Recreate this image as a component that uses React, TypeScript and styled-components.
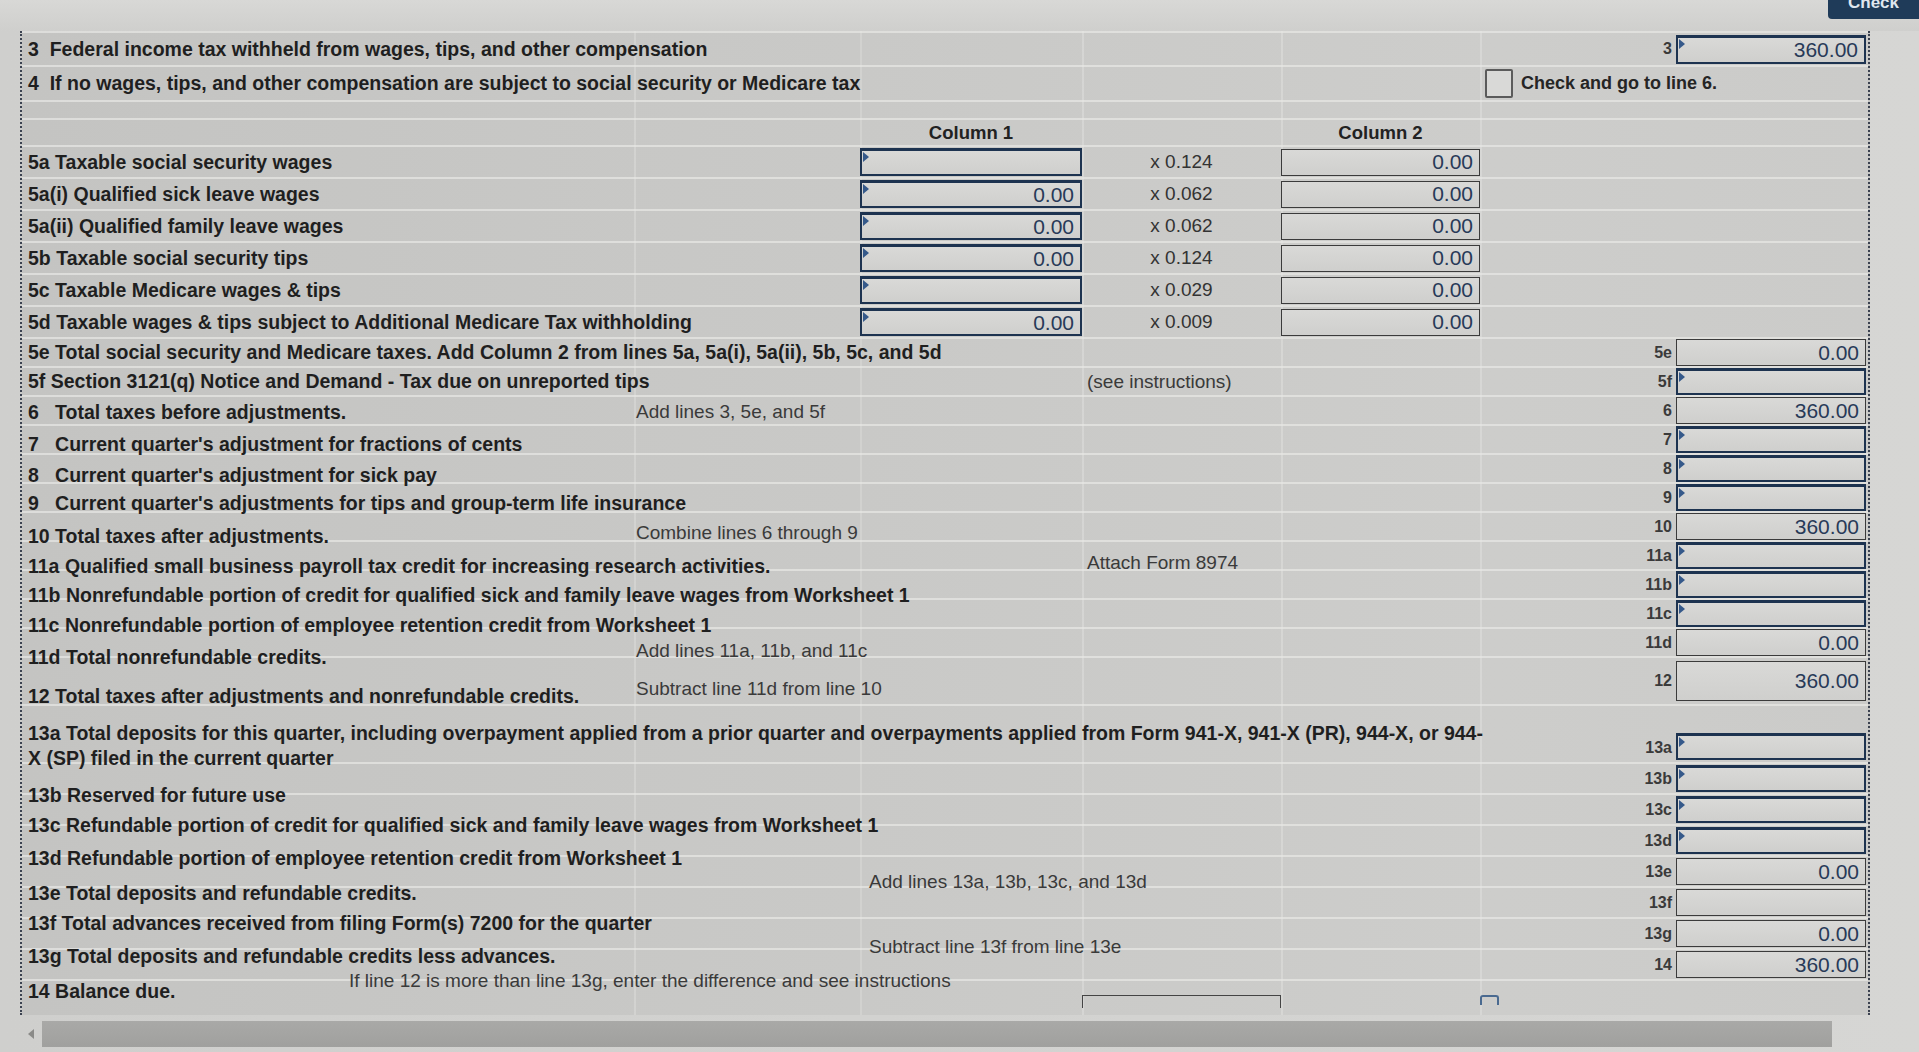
import React from "react";
import styled, { createGlobalStyle, css } from "styled-components";

const GlobalStyle = createGlobalStyle`
  html, body {
    margin: 0;
    padding: 0;
    background: #d2d2d0;
    font-family: "Liberation Sans", Arial, sans-serif;
    color: #1e1e1e;
    overflow: hidden;
  }
`;

const Page = styled.div`
  width: 1919px;
  height: 1052px;
  display: flex;
  flex-direction: column;
  background: linear-gradient(to right, #cfcfcd 0%, #d3d3d1 60%, #d6d6d4 100%);
`;

const TopStrip = styled.div`
  height: 31px;
  display: flex;
  justify-content: flex-end;
  align-items: flex-start;
  background: linear-gradient(to bottom, #d8d8d6, #cfcfcd);
`;

const CheckButton = styled.div`
  width: 91px;
  height: 19px;
  overflow: hidden;
  background: #1f3b59;
  border-bottom-left-radius: 4px;
  color: #dfe6ee;
  font-size: 17px;
  font-weight: bold;
  text-align: center;

  span {
    display: block;
    margin-top: -8px;
    line-height: 22px;
  }
`;

const FormArea = styled.div`
  margin-left: 20px;
  width: 1850px;
  height: 984px;
  overflow: hidden;
  border-left: 2px dotted #3b4250;
  border-right: 2px dotted #3b4250;
  box-sizing: border-box;
  background-color: #c7c7c5;
  background-image:
    linear-gradient(to right, transparent 612px, rgba(235,235,233,0.3) 612px, rgba(235,235,233,0.3) 614px, transparent 614px),
    linear-gradient(to right, transparent 838px, rgba(235,235,233,0.25) 838px, rgba(235,235,233,0.25) 840px, transparent 840px),
    linear-gradient(to right, transparent 1060px, rgba(235,235,233,0.35) 1060px, rgba(235,235,233,0.35) 1062px, transparent 1062px),
    linear-gradient(to right, transparent 1259px, rgba(235,235,233,0.35) 1259px, rgba(235,235,233,0.35) 1261px, transparent 1261px),
    linear-gradient(to right, transparent 1458px, rgba(235,235,233,0.35) 1458px, rgba(235,235,233,0.35) 1460px, transparent 1460px),
    linear-gradient(to right, #c4c4c2 0%, #c9c9c7 45%, #cdcdcb 80%, #cbcbc9 100%);
`;

const Row = styled.div<{ $h: number }>`
  display: grid;
  grid-template-columns: 612px 226px 222px 199px 199px 160px 36px 190px;
  grid-template-rows: 100%;
  height: ${(p) => p.$h}px;
  align-items: center;
  border-top: 2px solid rgba(232, 232, 230, 0.7);
  box-sizing: border-box;
`;

/* the photo sags toward the bottom left, so text on the left sits a bit lower */
const Label = styled.div<{ $drop?: number }>`
  grid-row: 1;
  grid-column: 1 / 7;
  padding-left: 6px;
  padding-top: ${(p) => (p.$drop ?? 0) * 2}px;
  font-size: 19.5px;
  font-weight: bold;
  color: #1f1f1f;
  white-space: nowrap;
  line-height: 25px;
`;

const Hint = styled.div<{ $col: number; $offset?: number; $drop?: number }>`
  grid-row: 1;
  grid-column: ${(p) => p.$col};
  padding-left: ${(p) => p.$offset ?? 2}px;
  padding-top: ${(p) => (p.$drop ?? 0) * 2}px;
  font-size: 19px;
  color: #3a3a3a;
  white-space: nowrap;
`;

const Rate = styled.div`
  grid-row: 1;
  grid-column: 4;
  text-align: center;
  font-size: 19px;
  color: #333;
`;

const ColumnHead = styled.div<{ $col: number }>`
  grid-row: 1;
  grid-column: ${(p) => p.$col};
  text-align: center;
  font-size: 18.5px;
  font-weight: bold;
  color: #222;
`;

const LineNo = styled.div<{ $end?: boolean }>`
  grid-row: 1;
  grid-column: 7;
  align-self: ${(p) => (p.$end ? "end" : "center")};
  padding-bottom: ${(p) => (p.$end ? 5 : 0)}px;
  text-align: right;
  padding-right: 4px;
  font-size: 16px;
  font-weight: bold;
  color: #3a3a3a;
`;

const Box = styled.div<{ $col: number; $edit?: boolean; $h?: number; $end?: boolean }>`
  grid-row: 1;
  grid-column: ${(p) => p.$col};
  align-self: ${(p) => (p.$end ? "end" : "center")};
  margin-bottom: ${(p) => (p.$end ? 2 : 0)}px;
  position: relative;
  height: ${(p) => p.$h ?? 27}px;
  box-sizing: border-box;
  display: flex;
  align-items: center;
  justify-content: flex-end;
  padding-right: 6px;
  font-size: 21px;
  color: #283a58;
  background: linear-gradient(to bottom, #d9d9d7, #cfcfcd);
  ${(p) =>
    p.$edit
      ? css`
          border: 2px solid #1d3350;
          border-top-width: 3px;
          &::before {
            content: "";
            position: absolute;
            left: 1px;
            top: 1px;
            border-top: 5px solid transparent;
            border-bottom: 5px solid transparent;
            border-left: 6px solid #35598a;
          }
        `
      : css`
          border: 1px solid #3b3b3b;
        `}
`;

const CheckWrap = styled.label`
  grid-row: 1;
  grid-column: 6 / 9;
  display: flex;
  align-items: center;
  gap: 8px;
  padding-left: 5px;
  font-size: 18px;
  font-weight: bold;
  color: #252525;
  white-space: nowrap;
`;

const CheckBox = styled.span`
  width: 24px;
  height: 25px;
  border: 2px solid #5b5b5b;
  border-radius: 2px;
  background: #d9d9d7;
`;

const Stub = styled.div<{ $col: number }>`
  grid-row: 1;
  grid-column: ${(p) => p.$col};
  align-self: start;
  height: 12px;
  border: 1px solid #444;
  border-bottom: none;
  margin-top: 14px;
`;

const Tab = styled.div`
  grid-row: 1;
  grid-column: 6;
  align-self: start;
  margin-top: 14px;
  width: 15px;
  height: 8px;
  border: 2px solid #4a6a90;
  border-bottom: none;
  border-radius: 3px 3px 0 0;
`;

const ScrollZone = styled.div`
  flex: 1;
  display: flex;
  align-items: center;
  gap: 8px;
  padding-left: 28px;
`;

const Arrow = styled.span`
  width: 0;
  height: 0;
  border-top: 5px solid transparent;
  border-bottom: 5px solid transparent;
  border-right: 6px solid #8a8a88;
`;

const Thumb = styled.div`
  width: 1790px;
  height: 26px;
  background: linear-gradient(to bottom, #a9a9a7, #a0a09e);
`;

type Line = {
  label: string;
  no: string;
  value?: string;
  edit?: boolean;
  hint?: { col: number; text: string; offset?: number; drop?: number };
  h?: number;
  boxH?: number;
  drop?: number;
};

const col1Rows = [
  { label: "5a Taxable social security wages", c1: "", rate: "x 0.124" },
  { label: "5a(i) Qualified sick leave wages", c1: "0.00", rate: "x 0.062" },
  { label: "5a(ii) Qualified family leave wages", c1: "0.00", rate: "x 0.062" },
  { label: "5b Taxable social security tips", c1: "0.00", rate: "x 0.124" },
  { label: "5c Taxable Medicare wages & tips", c1: "", rate: "x 0.029" },
  { label: "5d Taxable wages & tips subject to Additional Medicare Tax withholding", c1: "0.00", rate: "x 0.009" },
];

const midLines: Line[] = [
  { label: "5e Total social security and Medicare taxes. Add Column 2 from lines 5a, 5a(i), 5a(ii), 5b, 5c, and 5d", no: "5e", value: "0.00" },
  { label: "5f Section 3121(q) Notice and Demand - Tax due on unreported tips", no: "5f", edit: true, hint: { col: 4, text: "(see instructions)", offset: 5 } },
  { label: "6\u00a0\u00a0\u00a0Total taxes before adjustments.", no: "6", value: "360.00", drop: 2, hint: { col: 2, text: "Add lines 3, 5e, and 5f", drop: 1 } },
  { label: "7\u00a0\u00a0\u00a0Current quarter's adjustment for fractions of cents", no: "7", edit: true, drop: 5 },
  { label: "8\u00a0\u00a0\u00a0Current quarter's adjustment for sick pay", no: "8", edit: true, drop: 7 },
  { label: "9\u00a0\u00a0\u00a0Current quarter's adjustments for tips and group-term life insurance", no: "9", edit: true, drop: 6 },
  { label: "10 Total taxes after adjustments.", no: "10", value: "360.00", drop: 10, hint: { col: 2, text: "Combine lines 6 through 9", drop: 6 } },
  { label: "11a Qualified small business payroll tax credit for increasing research activities.", no: "11a", edit: true, drop: 11, hint: { col: 4, text: "Attach Form 8974", offset: 5, drop: 7 } },
  { label: "11b Nonrefundable portion of credit for qualified sick and family leave wages from Worksheet 1", no: "11b", edit: true, drop: 11 },
  { label: "11c Nonrefundable portion of employee retention credit from Worksheet 1", no: "11c", edit: true, drop: 12 },
  { label: "11d Total nonrefundable credits.", no: "11d", value: "0.00", drop: 15, hint: { col: 2, text: "Add lines 11a, 11b, and 11c", drop: 8 } },
  { label: "12 Total taxes after adjustments and nonrefundable credits.", no: "12", value: "360.00", h: 48, boxH: 40, drop: 15, hint: { col: 2, text: "Subtract line 11d from line 10", drop: 8 } },
];

const lowLines: Line[] = [
  { label: "13b Reserved for future use", no: "13b", edit: true, drop: 17 },
  { label: "13c Refundable portion of credit for qualified sick and family leave wages from Worksheet 1", no: "13c", edit: true, drop: 16 },
  { label: "13d Refundable portion of employee retention credit from Worksheet 1", no: "13d", edit: true, drop: 18 },
  { label: "13e Total deposits and refundable credits.", no: "13e", value: "0.00", drop: 22, hint: { col: 3, text: "Add lines 13a, 13b, 13c, and 13d", offset: 9, drop: 10 } },
  { label: "13f Total advances received from filing Form(s) 7200 for the quarter", no: "13f", drop: 21 },
  { label: "13g Total deposits and refundable credits less advances.", no: "13g", value: "0.00", drop: 23, hint: { col: 3, text: "Subtract line 13f from line 13e", offset: 9, drop: 13 } },
  { label: "14 Balance due.", no: "14", value: "360.00", drop: 27, hint: { col: 1, text: "If line 12 is more than line 13g, enter the difference and see instructions", offset: 327, drop: 16 } },
];

const LineRow = ({ line, h }: { line: Line; h: number }) => (
  <Row $h={line.h ?? h}>
    <Label $drop={line.drop}>{line.label}</Label>
    {line.hint && (
      <Hint $col={line.hint.col} $offset={line.hint.offset} $drop={line.hint.drop}>
        {line.hint.text}
      </Hint>
    )}
    <LineNo>{line.no}</LineNo>
    <Box $col={8} $edit={line.edit} $h={line.boxH}>
      {line.value}
    </Box>
  </Row>
);

export default function App() {
  return (
    <Page>
      <GlobalStyle />
      <TopStrip>
        <CheckButton>
          <span>Check</span>
        </CheckButton>
      </TopStrip>

      <FormArea>
        <Row $h={34}>
          <Label>3&nbsp;&nbsp;Federal income tax withheld from wages, tips, and other compensation</Label>
          <LineNo>3</LineNo>
          <Box $col={8} $edit $h={29}>
            360.00
          </Box>
        </Row>
        <Row $h={35}>
          <Label>4&nbsp;&nbsp;If no wages, tips, and other compensation are subject to social security or Medicare tax</Label>
          <CheckWrap>
            <CheckBox />
            Check and go to line 6.
          </CheckWrap>
        </Row>
        <Row $h={18} />
        <Row $h={27}>
          <ColumnHead $col={3}>Column 1</ColumnHead>
          <ColumnHead $col={5}>Column 2</ColumnHead>
        </Row>
        {col1Rows.map((r) => (
          <Row $h={32} key={r.label}>
            <Label>{r.label}</Label>
            <Box $col={3} $edit $h={28}>
              {r.c1}
            </Box>
            <Rate>{r.rate}</Rate>
            <Box $col={5} $h={27}>
              0.00
            </Box>
          </Row>
        ))}
        {midLines.map((l) => (
          <LineRow key={l.no} line={l} h={29} />
        ))}
        <Row $h={58}>
          <Label $drop={12}>
            13a Total deposits for this quarter, including overpayment applied from a prior quarter and overpayments applied from Form 941-X, 941-X (PR), 944-X, or 944-
            <br />
            X (SP) filed in the current quarter
          </Label>
          <LineNo $end>13a</LineNo>
          <Box $col={8} $edit $end />
        </Row>
        {lowLines.map((l) => (
          <LineRow key={l.no} line={l} h={31} />
        ))}
        <Row $h={50}>
          <Stub $col={4} />
          <Tab />
        </Row>
      </FormArea>

      <ScrollZone>
        <Arrow />
        <Thumb />
      </ScrollZone>
    </Page>
  );
}
